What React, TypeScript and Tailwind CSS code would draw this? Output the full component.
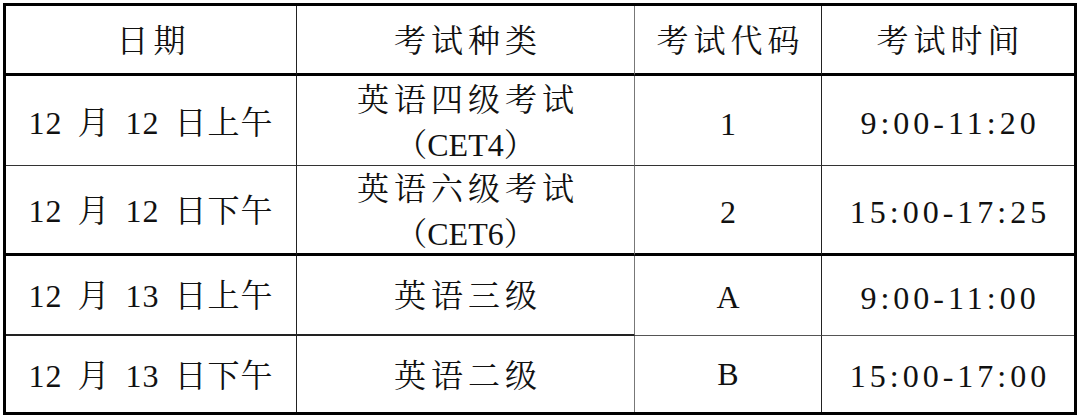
import React from "react";

const font = {
  fontFamily:
    '"Liberation Serif", "Noto Serif CJK SC", "Noto Sans CJK SC", serif',
};

function Cell({
  children,
  className = "",
}: {
  children: React.ReactNode;
  className?: string;
}) {
  return (
    <div
      className={`flex items-center justify-center text-center text-[32px] text-[#111] ${className}`}
    >
      {children}
    </div>
  );
}

export default function App() {
  return (
    <div className="w-[1080px] h-[418px] bg-white" style={font}>
      <div className="ml-[3px] mt-[3px] w-[1074px] h-[412px] border-[3px] border-black grid grid-cols-[291px_338px_187px_252px] grid-rows-[70px_90px_90px_80px_76px]">
        {/* header */}
        <Cell className="border-r border-r-[#222] border-b-[3px] border-b-black tracking-[5px] pl-[5px] pt-[2px]">日期</Cell>
        <Cell className="border-r border-r-[#777] border-b-[3px] border-b-black tracking-[5px] pl-[5px] pt-[2px]">考试种类</Cell>
        <Cell className="border-r border-r-[#222] border-b-[3px] border-b-black tracking-[5px] pl-[5px] pt-[2px]">考试代码</Cell>
        <Cell className="border-b-[3px] border-b-black tracking-[5px] pl-[5px] pt-[2px]">考试时间</Cell>

        {/* row 1 */}
        <Cell className="border-r border-r-[#222] border-b border-b-[#333] tracking-[1px] [word-spacing:6px] pt-[4px]">12 月 12 日上午</Cell>
        <Cell className="border-r border-r-[#777] border-b border-b-[#333] pt-[4px]">
          <div className="flex flex-col leading-[45px]">
            <span className="tracking-[5px] pl-[5px]">英语四级考试</span>
            <span>（CET4）</span>
          </div>
        </Cell>
        <Cell className="border-r border-r-[#222] border-b border-b-[#333] pt-[6px]">1</Cell>
        <Cell className="border-b border-b-[#333] tracking-[4px] pl-[4px] pt-[4px]">9:00-11:20</Cell>

        {/* row 2 */}
        <Cell className="border-r border-r-[#222] border-b-[3px] border-b-black tracking-[1px] [word-spacing:6px] pt-[2px]">12 月 12 日下午</Cell>
        <Cell className="border-r border-r-[#777] border-b-[3px] border-b-black pt-[4px]">
          <div className="flex flex-col leading-[45px]">
            <span className="tracking-[5px] pl-[5px]">英语六级考试</span>
            <span>（CET6）</span>
          </div>
        </Cell>
        <Cell className="border-r border-r-[#222] border-b-[3px] border-b-black pt-[4px]">2</Cell>
        <Cell className="border-b-[3px] border-b-black tracking-[4px] pl-[4px] pt-[4px]">15:00-17:25</Cell>

        {/* row 3 */}
        <Cell className="border-r border-r-[#222] border-b-2 border-b-[#222] tracking-[1px] [word-spacing:6px] pt-[2px]">12 月 13 日上午</Cell>
        <Cell className="border-r border-r-[#777] border-b-2 border-b-[#222] tracking-[5px] pl-[5px] pt-[2px]">英语三级</Cell>
        <Cell className="border-r border-r-[#222] border-b border-b-[#555] pt-[2px]">A</Cell>
        <Cell className="border-b border-b-[#555] tracking-[4px] pl-[4px] pt-[4px]">9:00-11:00</Cell>

        {/* row 4 */}
        <Cell className="border-r border-r-[#222] tracking-[1px] [word-spacing:6px] pt-[4px]">12 月 13 日下午</Cell>
        <Cell className="border-r border-r-[#777] tracking-[5px] pl-[5px] pt-[4px]">英语二级</Cell>
        <Cell className="border-r border-r-[#222]">B</Cell>
        <Cell className="tracking-[4px] pl-[4px] pt-[4px]">15:00-17:00</Cell>
      </div>
    </div>
  );
}
